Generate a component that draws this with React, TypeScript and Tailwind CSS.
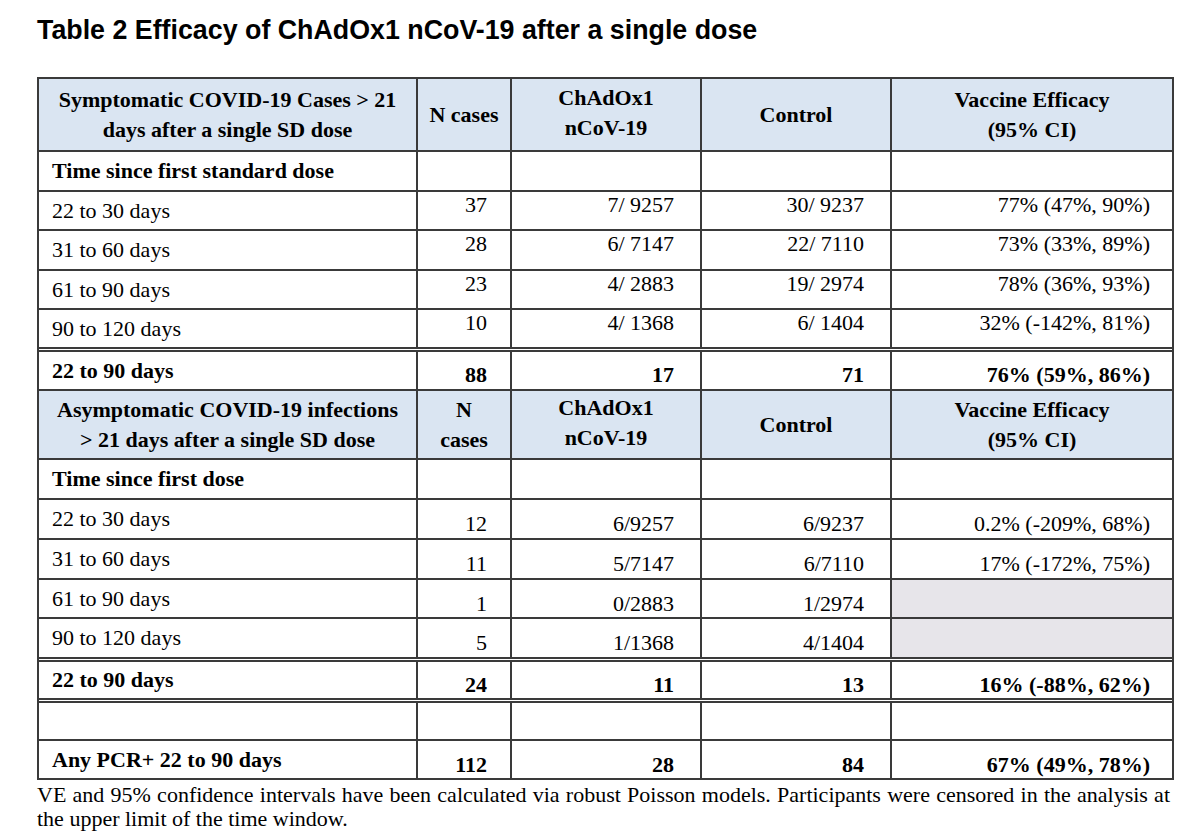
import React from "react";

const GRID = "grid grid-cols-[377px_94px_190px_190px_282px]";
const LINE = "border-b-2 border-[#3a3a3a]";
const DOUBLE = "border-b-[5px] border-double border-[#3a3a3a]";
const PR = ["pl-[13px]", "pr-[23px]", "pr-[26px]", "pr-[26px]", "pr-[22px]"];

type RowProps = {
  h: string;
  border: string;
  label?: React.ReactNode;
  values: string[];
  bold?: boolean;
  shift: string;
  gray?: boolean[];
};

function DataRow({ h, border, label, values, bold, shift, gray }: RowProps) {
  return (
    <div className={`${GRID} ${h} ${border} ${bold ? "font-bold" : ""}`}>
      <div className="flex items-center pl-[13px] whitespace-nowrap">{label}</div>
      {values.map((v, i) => (
        <div
          key={i}
          className={`flex items-center justify-end whitespace-nowrap border-l-2 border-[#3a3a3a] ${PR[i + 1]} ${shift} ${
            gray && gray[i] ? "bg-[#e7e5ea]" : ""
          }`}
        >
          {v}
        </div>
      ))}
    </div>
  );
}

function HeadRow({
  h,
  first,
  n,
}: {
  h: string;
  first: [string, string];
  n: React.ReactNode;
}) {
  return (
    <div className={`${GRID} ${h} ${LINE} bg-[#dae5f2] font-bold leading-[30px] text-center`}>
      <div className="flex items-center justify-center whitespace-nowrap">
        <div>
          {first[0]}
          <br />
          {first[1]}
        </div>
      </div>
      <div className="flex items-center justify-center whitespace-nowrap border-l-2 border-[#3a3a3a]">
        <div>{n}</div>
      </div>
      <div className="flex items-center justify-center whitespace-nowrap border-l-2 border-[#3a3a3a] pb-[3px]">
        <div>
          ChAdOx1
          <br />
          nCoV-19
        </div>
      </div>
      <div className="flex items-center justify-center whitespace-nowrap border-l-2 border-[#3a3a3a]">
        <div>Control</div>
      </div>
      <div className="flex items-center justify-center whitespace-nowrap border-l-2 border-[#3a3a3a]">
        <div>
          Vaccine Efficacy
          <br />
          (95% CI)
        </div>
      </div>
    </div>
  );
}

function SectionRow({ h, label }: { h: string; label: string }) {
  return (
    <div className={`${GRID} ${h} ${LINE} font-bold`}>
      <div className="flex items-center pl-[13px] whitespace-nowrap">{label}</div>
      <div className="border-l-2 border-[#3a3a3a]" />
      <div className="border-l-2 border-[#3a3a3a]" />
      <div className="border-l-2 border-[#3a3a3a]" />
      <div className="border-l-2 border-[#3a3a3a]" />
    </div>
  );
}

export default function App() {
  return (
    <div className="min-h-[837px] w-[1200px] bg-white text-[22px] leading-[24px] text-black font-['Liberation_Serif','Times_New_Roman',serif]">
      <div className="pt-[17px] pl-[37px]">
        <h1 className="h-[27px] text-[26.8px] leading-[27px] font-bold text-black font-['Liberation_Sans',Arial,sans-serif] whitespace-nowrap">
          Table 2 Efficacy of ChAdOx1 nCoV-19 after a single dose
        </h1>
      </div>

      <div className="ml-[37px] mt-[33px] w-[1137px] border-2 border-[#3a3a3a]">
        <HeadRow
          h="h-[73px]"
          first={["Symptomatic COVID-19 Cases > 21", "days after a single SD dose"]}
          n="N cases"
        />
        <SectionRow h="h-[40px]" label="Time since first standard dose" />
        <DataRow h="h-[39px]" border={LINE} label="22 to 30 days" values={["37", "7/ 9257", "30/ 9237", "77% (47%, 90%)"]} shift="pb-[12px]" />
        <DataRow h="h-[40px]" border={LINE} label="31 to 60 days" values={["28", "6/ 7147", "22/ 7110", "73% (33%, 89%)"]} shift="pb-[12px]" />
        <DataRow h="h-[39px]" border={LINE} label="61 to 90 days" values={["23", "4/ 2883", "19/ 2974", "78% (36%, 93%)"]} shift="pb-[12px]" />
        <DataRow h="h-[42px]" border={DOUBLE} label="90 to 120 days" values={["10", "4/ 1368", "6/ 1404", "32% (-142%, 81%)"]} shift="pb-[12px]" />
        <DataRow h="h-[39px]" border={LINE} bold label="22 to 90 days" values={["88", "17", "71", "76% (59%, 86%)"]} shift="pt-[8px]" />

        <HeadRow
          h="h-[69px]"
          first={["Asymptomatic COVID-19 infections", "> 21 days after a single SD dose"]}
          n={
            <>
              N
              <br />
              cases
            </>
          }
        />
        <SectionRow h="h-[40px]" label="Time since first dose" />
        <DataRow h="h-[40px]" border={LINE} label="22 to 30 days" values={["12", "6/9257", "6/9237", "0.2% (-209%, 68%)"]} shift="pt-[10px]" />
        <DataRow h="h-[40px]" border={LINE} label="31 to 60 days" values={["11", "5/7147", "6/7110", "17% (-172%, 75%)"]} shift="pt-[10px]" />
        <DataRow h="h-[39px]" border={LINE} label="61 to 90 days" values={["1", "0/2883", "1/2974", ""]} shift="pt-[10px]" gray={[false, false, false, true]} />
        <DataRow h="h-[43px]" border={DOUBLE} label="90 to 120 days" values={["5", "1/1368", "4/1404", ""]} shift="pt-[10px]" gray={[false, false, false, true]} />
        <DataRow h="h-[41px]" border={DOUBLE} bold label="22 to 90 days" values={["24", "11", "13", "16% (-88%, 62%)"]} shift="pt-[9px]" />
        <DataRow h="h-[38px]" border={LINE} label="" values={["", "", "", ""]} shift="" />
        <DataRow h="h-[37px]" border="" bold label="Any PCR+ 22 to 90 days" values={["112", "28", "84", "67% (49%, 78%)"]} shift="pt-[10px]" />
      </div>

      <p className="ml-[37px] mt-[3px] w-[1133px] text-justify text-[22px] leading-[24px]">
        VE and 95% confidence intervals have been calculated via robust Poisson models. Participants were censored in the analysis at the upper limit of the time window.
      </p>
    </div>
  );
}
